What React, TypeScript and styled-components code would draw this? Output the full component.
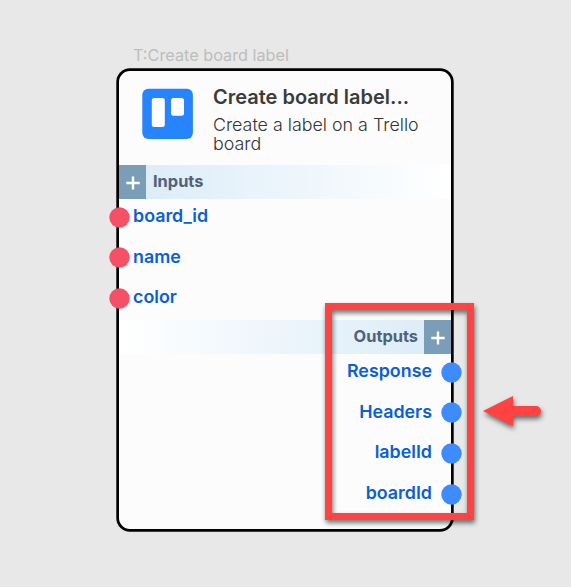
import React from "react";
import styled, { createGlobalStyle } from "styled-components";

const GlobalStyle = createGlobalStyle`
  *, *::before, *::after { box-sizing: border-box; }
  body { margin: 0; background: #e8e8e8; font-family: Inter, "Liberation Sans", sans-serif; }
`;

const Canvas = styled.main`
  position: relative;
  width: 571px;
  height: 587px;
  padding: 45px 0 0 117px;
  overflow: hidden;
  background: #e8e8e8;
`;

const NodeTag = styled.div`
  height: 24px;
  padding-left: 16px;
  font-size: 16.25px;
  line-height: 20px;
  color: #bdbdbd;
  white-space: nowrap;
`;

const Card = styled.article`
  display: flex;
  flex-direction: column;
  width: 336px;
  height: 462px;
  border: 2px solid #000;
  border-radius: 13px;
  background: #fcfcfc;
  box-shadow: 0 0 0 0.7px #000;
`;

const Header = styled.header`
  display: flex;
  height: 94px;
  padding: 17px 0 0 23px;
  gap: 20px;
`;

const Titles = styled.div`
  width: 215px;
`;

const Title = styled.h1`
  margin: 0;
  font-size: 20px;
  font-weight: 640;
  line-height: 19px;
  color: #3b3b3b;
  white-space: nowrap;
`;

const Description = styled.p`
  margin: 8px 0 0;
  font-size: 17.85px;
  font-weight: 300;
  line-height: 19px;
  color: #333;
`;

type Side = "left" | "right";

const SectionBar = styled.div<{ $side: Side }>`
  display: flex;
  flex-direction: ${(p) => (p.$side === "left" ? "row" : "row-reverse")};
  height: 34px;
  background: linear-gradient(to ${(p) => (p.$side === "left" ? "right" : "left")}, #d9ebf8, #ffffff);
`;

const AddButton = styled.button`
  display: flex;
  align-items: center;
  justify-content: center;
  width: 27px;
  height: 34px;
  padding: 2px 0 0 1px;
  border: 0;
  background: #7a9db8;
`;

const SectionTitle = styled.h2<{ $side: Side }>`
  margin: 0 ${(p) => (p.$side === "left" ? 7 : 6)}px;
  font-size: 16.4px;
  font-weight: 650;
  line-height: 33px;
  color: #4f6278;
`;

const PortList = styled.ul<{ $height: number }>`
  height: ${(p) => p.$height}px;
  margin: 0;
  padding: 0;
  list-style: none;
`;

const PortRow = styled.li<{ $side: Side }>`
  display: flex;
  flex-direction: ${(p) => (p.$side === "left" ? "row" : "row-reverse")};
  align-items: center;
  height: 40.6px;
  margin: 0 -11.3px 0 -10px;
  gap: ${(p) => (p.$side === "left" ? 3 : 9.3)}px;
`;

const PortDot = styled.svg`
  display: block;
  flex: none;
  width: 21px;
  height: 21px;
  margin-top: -4px;
`;

const PortLabel = styled.span`
  margin-top: -6.6px;
  font-size: 17.85px;
  font-weight: 645;
  line-height: 22px;
  color: #0b5fd3;
`;

const Highlight = styled.div`
  position: absolute;
  left: 325px;
  top: 303px;
  width: 149px;
  height: 217px;
  border: 7px solid #ff4242;
  filter: drop-shadow(1px 3px 2.5px rgba(0, 0, 0, 0.55));
`;

const Arrow = styled.svg`
  position: absolute;
  left: 475px;
  top: 388px;
  filter: drop-shadow(1px 3px 2.5px rgba(0, 0, 0, 0.55));
`;

const TrelloLogo = () => (
  <svg width="51" height="51" viewBox="0 0 51 51">
    <rect x="0.3" y="0.7" width="50.6" height="50.3" rx="6" fill="#2684ff" />
    <rect x="9.8" y="10" width="13" height="29" rx="2.5" fill="#fff" />
    <rect x="29" y="10" width="13" height="17.8" rx="2.5" fill="#fff" />
  </svg>
);

const Plus = () => (
  <svg width="14" height="14" viewBox="0 0 14 14">
    <path d="M7 0.5v13M0.3 7h13.4" stroke="#fff" strokeWidth="2.4" />
  </svg>
);

const Section = ({ title, side, ports, height }: { title: string; side: Side; ports: string[]; height: number }) => (
  <section>
    <SectionBar $side={side}>
      <AddButton aria-label={`Add to ${title}`}>
        <Plus />
      </AddButton>
      <SectionTitle $side={side}>{title}</SectionTitle>
    </SectionBar>
    <PortList $height={height}>
      {ports.map((port) => (
        <PortRow key={port} $side={side}>
          <PortDot viewBox="0 0 21 21">
            <circle cx="10.5" cy="10.5" r="10.2" fill={side === "left" ? "#f55066" : "#3d8bfd"} />
          </PortDot>
          <PortLabel>{port}</PortLabel>
        </PortRow>
      ))}
    </PortList>
  </section>
);

export default function App() {
  return (
    <Canvas>
      <GlobalStyle />
      <NodeTag>T:Create board label</NodeTag>
      <Card>
        <Header>
          <TrelloLogo />
          <Titles>
            <Title>Create board label...</Title>
            <Description>Create a label on a Trello board</Description>
          </Titles>
        </Header>
        <Section title="Inputs" side="left" ports={["board_id", "name", "color"]} height={121} />
        <Section title="Outputs" side="right" ports={["Response", "Headers", "labelId", "boardId"]} height={163} />
      </Card>
      <Highlight />
      <Arrow width="75" height="50" viewBox="0 0 75 50">
        <path d="M8 23L38 8v10H61a5 5 0 0 1 0 10H38V38.2Z" fill="#ff4242" />
      </Arrow>
    </Canvas>
  );
}
